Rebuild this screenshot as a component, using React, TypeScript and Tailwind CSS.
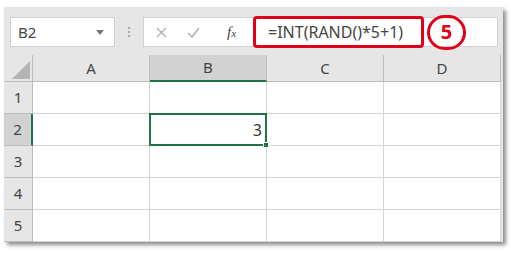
const COLS = ["A", "B", "C", "D"];
const ROWS = [1, 2, 3, 4, 5];

const font = { fontFamily: '"Noto Sans", "Open Sans", sans-serif' };

function Toolbar() {
  return (
    <div className="flex h-[48px] items-start bg-[#e6e6e6] pt-[10px]">
      {/* Name box */}
      <div className="ml-[6px] flex h-[30px] w-[105px] items-center justify-between border border-[#d0d0d0] bg-white pl-[7px] pr-[10px]">
        <span className="text-[15px] text-[#444]">B2</span>
        <svg width="8" height="5" viewBox="0 0 8 5">
          <path d="M0 0 L8 0 L4 5 Z" fill="#777" />
        </svg>
      </div>
      {/* grip dots */}
      <div className="flex h-[30px] w-[28px] flex-col items-center justify-center gap-[2px]">
        <span className="h-[2px] w-[2px] bg-[#aaa]" />
        <span className="h-[2px] w-[2px] bg-[#aaa]" />
        <span className="h-[2px] w-[2px] bg-[#aaa]" />
      </div>
      {/* formula area */}
      <div className="flex h-[30px] w-[355px] items-center border border-[#d0d0d0] bg-white">
        <div className="flex w-[109px] items-center">
          <svg className="ml-[12px]" width="11" height="11" viewBox="0 0 11 11">
            <path d="M1 1 L10 10 M10 1 L1 10" stroke="#b0b0b0" strokeWidth="1.3" />
          </svg>
          <svg className="ml-[20px]" width="13" height="11" viewBox="0 0 13 11">
            <path d="M1 6 L5 10 L12 1" stroke="#b0b0b0" strokeWidth="1.5" fill="none" />
          </svg>
          <span
            className="ml-[27px] text-[15px] italic text-[#444]"
            style={{ fontFamily: '"Liberation Serif", serif' }}
          >
            f<span className="text-[11px]">x</span>
          </span>
        </div>
        <div className="flex h-[32px] w-[171px] items-center rounded-[4px] border-[3px] border-[#e0001b] pl-[12px]">
          <span className="text-[16px] text-[#444]">=INT(RAND()*5+1)</span>
        </div>
        <div className="ml-[3px] flex h-[35px] w-[39px] items-center justify-center rounded-full border-[3px] border-[#e0001b]">
          <span className="text-[20px] font-bold leading-none text-[#e0001b]">5</span>
        </div>
      </div>
    </div>
  );
}

function Grid() {
  return (
    <div className="grid grid-cols-[29px_117px_117px_117px_117px] grid-rows-[27px_32px_32px_32px_32px_32px]">
      {/* corner */}
      <div className="relative border-b border-r border-[#bdbdbd] bg-[#e6e6e6]">
        <svg className="absolute bottom-[2px] right-[2px]" width="18" height="18" viewBox="0 0 18 18">
          <path d="M18 0 L18 18 L0 18 Z" fill="#b4b4b4" />
        </svg>
      </div>
      {COLS.map((c) => (
        <div
          key={c}
          className={`flex items-center justify-center border-r text-[15px] text-[#444] ${
            c === "B"
              ? "border-b-2 border-b-[#217346] border-r-[#bdbdbd] bg-[#d2d2d2]"
              : "border-b border-[#bdbdbd] bg-[#e6e6e6]"
          }`}
        >
          {c}
        </div>
      ))}
      {ROWS.map((r) => (
        <Row key={r} r={r} />
      ))}
    </div>
  );
}

function Row({ r }: { r: number }) {
  const active = r === 2;
  return (
    <>
      <div
        className={`flex items-center justify-center border-b border-[#bdbdbd] text-[15px] text-[#444] ${
          active ? "border-r-2 border-r-[#217346] bg-[#d2d2d2]" : "border-r bg-[#e6e6e6]"
        }`}
      >
        {r}
      </div>
      {COLS.map((c) =>
        active && c === "B" ? (
          <div
            key={c}
            className="relative -mt-px -ml-px flex items-center justify-end border-2 border-[#217346] bg-white pr-[3px] text-[16px] text-[#333]"
          >
            3
            <span className="absolute -bottom-[4px] -right-[4px] h-[6px] w-[6px] border border-white bg-[#217346]" />
          </div>
        ) : (
          <div key={c} className="border-b border-r border-[#d4d4d4] bg-white" />
        )
      )}
    </>
  );
}

export default function App() {
  return (
    <div className="h-[255px] w-[511px] bg-white pl-[4px] pt-[7px]" style={font}>
      <div className="w-[499px] overflow-hidden bg-[#e6e6e6] shadow-[3px_3px_4px_rgba(0,0,0,0.45)]">
        <Toolbar />
        <Grid />
      </div>
    </div>
  );
}
